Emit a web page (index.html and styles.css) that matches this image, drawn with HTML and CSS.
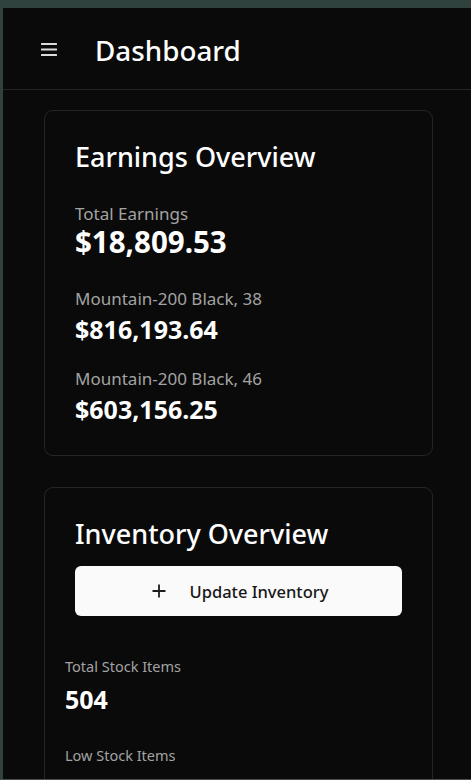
FILE: index.html
```html
<!DOCTYPE html>
<html lang="en">
<head>
<meta charset="utf-8">
<title>Dashboard</title>
<link rel="stylesheet" href="styles.css">
</head>
<body>
<div class="app">
  <header class="topbar">
    <button class="menu-btn" aria-label="Menu">
      <svg width="16" height="13" viewBox="0 0 16 13" aria-hidden="true">
        <rect x="0" y="0" width="16" height="2" rx="0.5" fill="#dcdcdc"/>
        <rect x="0" y="5.5" width="16" height="2" rx="0.5" fill="#dcdcdc"/>
        <rect x="0" y="11" width="16" height="2" rx="0.5" fill="#dcdcdc"/>
      </svg>
    </button>
    <h1 class="page-title">Dashboard</h1>
  </header>

  <main class="content">
    <section class="card card-earnings">
      <h2 class="card-title">Earnings Overview</h2>
      <div class="stat stat-first">
        <div class="stat-label">Total Earnings</div>
        <div class="stat-value stat-value-lg">$18,809.53</div>
      </div>
      <div class="stat">
        <div class="stat-label">Mountain-200 Black, 38</div>
        <div class="stat-value">$816,193.64</div>
      </div>
      <div class="stat stat-tight">
        <div class="stat-label">Mountain-200 Black, 46</div>
        <div class="stat-value">$603,156.25</div>
      </div>
    </section>

    <section class="card card-inventory">
      <div class="card-head">
        <h2 class="card-title">Inventory Overview</h2>
        <button class="primary-btn">
          <svg width="14" height="14" viewBox="0 0 14 14" aria-hidden="true">
            <path d="M7 0.5v13M0.5 7h13" stroke="#1c1c1c" stroke-width="1.8" fill="none"/>
          </svg>
          <span>Update Inventory</span>
        </button>
      </div>
      <div class="card-body">
        <div class="inv-stat">
          <div class="inv-label">Total Stock Items</div>
          <div class="inv-value">504</div>
        </div>
        <div class="inv-stat">
          <div class="inv-label">Low Stock Items</div>
          <div class="inv-value">12</div>
        </div>
      </div>
    </section>
  </main>
</div>
</body>
</html>
```

FILE: styles.css
```css
* {
  box-sizing: border-box;
}

html, body {
  margin: 0;
  height: 780px;
}

body {
  background: #2f423e;
  padding: 8px 0 0 3px;
  border-bottom: 1px solid #4a4d4c;
  font-family: "Noto Sans", "Open Sans", sans-serif;
  color: #fafafa;
  overflow: hidden;
}

.app {
  height: 771px;
  overflow: hidden;
  background: #0a0a0a;
}

.topbar {
  display: flex;
  align-items: center;
  padding: 22px 0 19px 38px;
  border-bottom: 1px solid #262626;
}

.menu-btn {
  display: flex;
  background: none;
  border: 0;
  padding: 0;
  margin: 0 38px 0 0;
  position: relative;
  top: -1px;
}

.page-title {
  margin: 0;
  font-size: 27.8px;
  line-height: 40px;
  font-weight: 500;
  color: #ffffff;
}

.content {
  padding: 20px 38px 0 41px;
  display: flex;
  flex-direction: column;
  gap: 31px;
}

.card {
  border: 1px solid #262626;
  border-radius: 9px;
  background: #0a0a0a;
}

.card-earnings {
  padding: 28px 30px 30px;
}

.card-title {
  margin: 0;
  font-size: 27px;
  line-height: 36px;
  font-weight: 500;
  color: #ffffff;
}

.stat {
  margin-top: 28px;
}

.stat-first {
  margin-top: 29px;
}

.stat-tight {
  margin-top: 23px;
}

.stat-label {
  font-size: 17px;
  line-height: 22px;
  color: #a3a3a3;
}

.stat-first .stat-label {
  line-height: 20px;
}

.stat-value {
  margin-top: 3px;
  font-size: 25px;
  line-height: 32px;
  font-weight: 700;
  color: #ffffff;
}

.stat-value-lg {
  margin-top: 0;
  font-size: 29.5px;
  line-height: 36px;
}

.card-head {
  padding: 28px 30px 0;
}

.primary-btn {
  margin-top: 14px;
  width: 100%;
  height: 50px;
  display: flex;
  align-items: center;
  justify-content: center;
  gap: 24px;
  padding: 0 0 0 3px;
  border: 0;
  border-radius: 6px;
  background: #fafafa;
  color: #171717;
  font-family: inherit;
  font-size: 16.5px;
  font-weight: 500;
}

.card-body {
  padding: 40px 20px 20px;
}

.inv-stat + .inv-stat {
  margin-top: 30px;
}

.inv-label {
  font-size: 14.5px;
  line-height: 20px;
  color: #a3a3a3;
}

.inv-value {
  margin-top: 7px;
  font-size: 25px;
  line-height: 32px;
  font-weight: 700;
  color: #ffffff;
}
```
